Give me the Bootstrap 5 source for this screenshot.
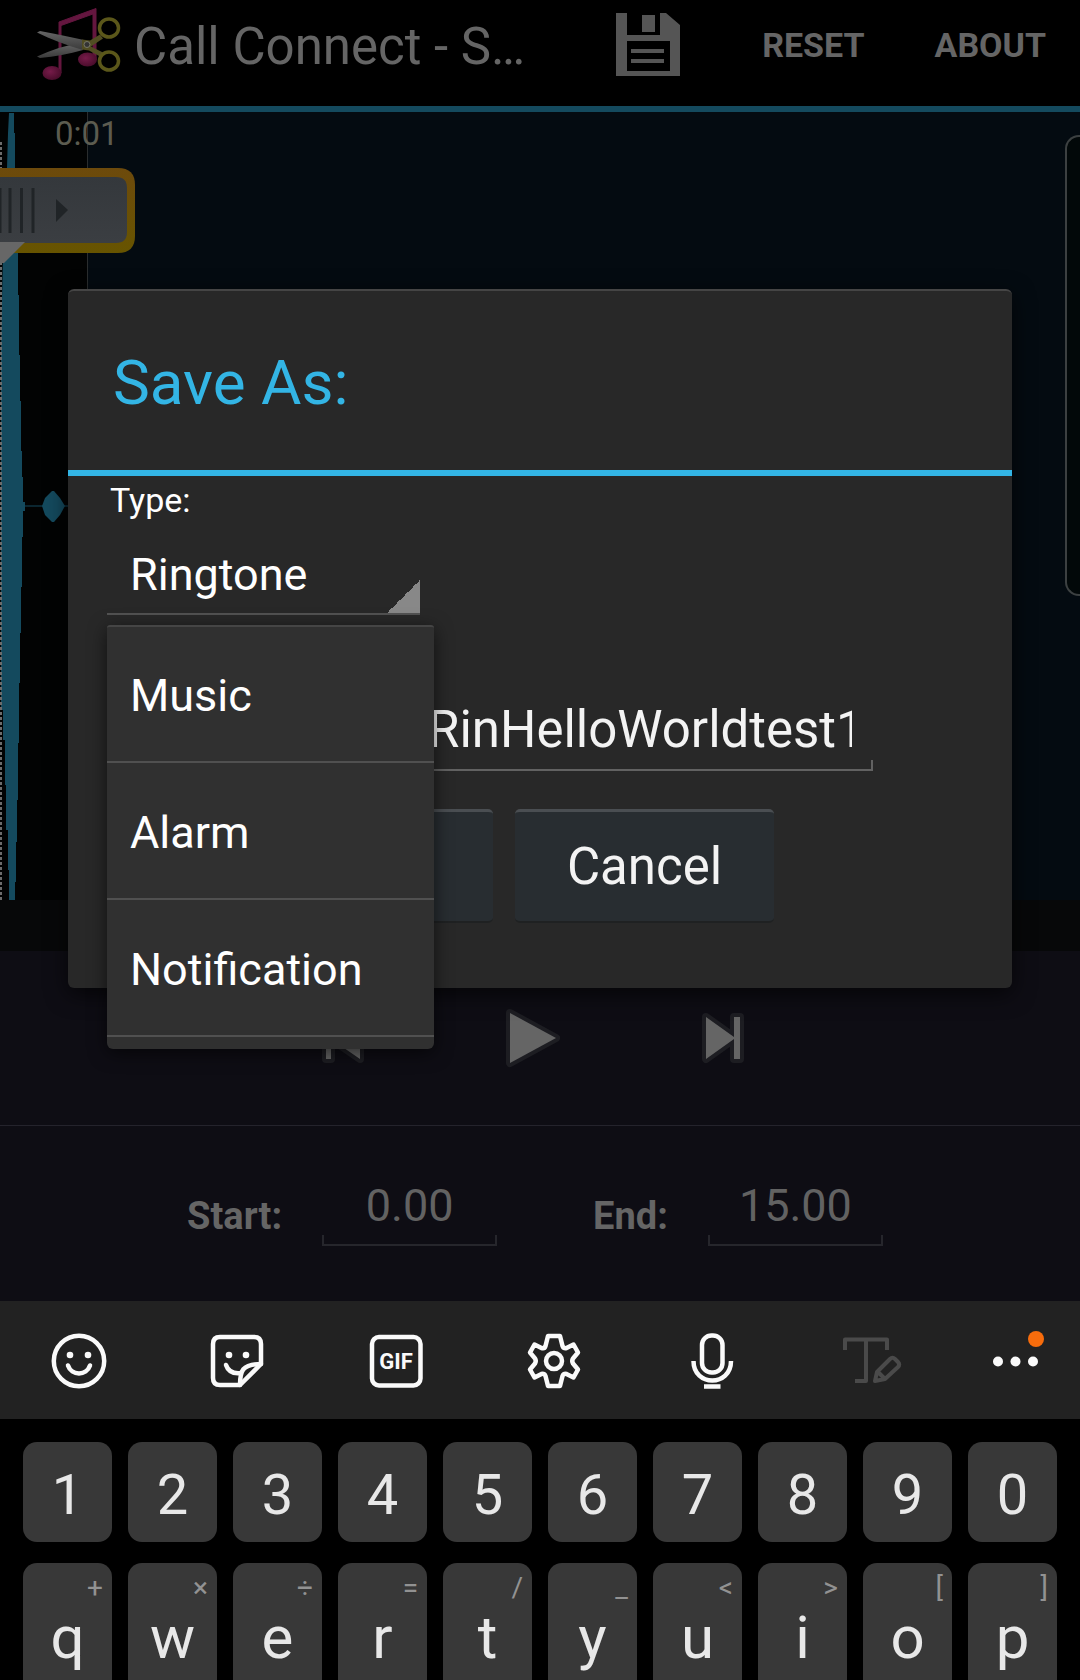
<!DOCTYPE html>
<html lang="en">
<head>
<meta charset="utf-8">
<meta name="viewport" content="width=device-width, initial-scale=1">
<title>Call Connect - Save As</title>
<link href="https://cdn.jsdelivr.net/npm/bootstrap@5.3.0/dist/css/bootstrap.min.css" rel="stylesheet">
<style>
  body { background: #000; font-family: Roboto, "Noto Sans", sans-serif; color: #fff; }
  button, input, select { font-family: inherit; }
  .app { height: 100vh; overflow: hidden; }
  .bare { background: none; border: 0; padding: 0; color: inherit; }

  /* title bar */
  .topbar { height: 112px; padding: 0 34px 16px 36px; border-bottom: 6px solid #144a5e; }
  .app-title { font-size: 51px; line-height: 60px; color: #656565; font-weight: 400; margin: 0 0 0 12px; padding-top: 4px; }
  .bar-actions { gap: 70px; }
  .bar-action { font-size: 34px; line-height: 40px; font-weight: 700; color: #656565; }
  .bar-save { margin: 0 12px 2px 0; }

  /* waveform */
  .wave-panel { height: 839px; background: #070809; }
  .wave-view { height: 788px; background: #040b11; }
  .wave-played { width: 88px; background: #020303; border-right: 1px solid #2a2d2e; }
  .wave-time { left: 55px; top: 2px; font-size: 33px; line-height: 40px; color: #5c5c50; }
  .wave-art { left: 0; top: 0; }
  .end-handle { right: 0; top: 23px; width: 15px; height: 461px; border: 2px solid #3c4041; border-right: 0; border-radius: 14px 0 0 14px; background: #020809; }

  /* playback and range */
  .panel { background: #0e0d14; }
  .playback { height: 175px; border-bottom: 1px solid #24232c; padding-right: 14px; }
  .playback button { width: 190px; height: 80px; }
  .range { height: 175px; padding-right: 10px; }
  .range label { font-size: 38px; line-height: 48px; font-weight: 700; color: #656565; padding-top: 4px; }
  .underlined {
    border: 0; border-radius: 0; outline: 0; color: inherit;
    background:
      linear-gradient(var(--rule), var(--rule)) bottom / 100% 2px no-repeat,
      linear-gradient(var(--rule), var(--rule)) left bottom / 2px 11px no-repeat,
      linear-gradient(var(--rule), var(--rule)) right bottom / 2px 11px no-repeat;
  }
  .range .underlined { --rule: #26262c; width: 175px; height: 64px; padding: 0 0 16px; font-size: 45px; text-align: center; color: #626262; }
  .range-pair { gap: 40px; }
  .range-pairs { gap: 96px; }

  /* dialog */
  .save-dialog { top: 289px; left: 68px; right: 68px; background: #282828; border-top: 2px solid #454545; border-radius: 6px; box-shadow: 0 6px 22px rgba(0,0,0,.65); z-index: 2; }
  .dialog-head { height: 185px; padding: 4px 45px 0; border-bottom: 6px solid #33b5e5; }
  .dialog-head h1 { font-size: 62px; line-height: 72px; font-weight: 400; color: #33b5e5; margin: 0; }
  .dialog-main { padding: 4px 39px 65px; }
  .dialog-main label { font-size: 34px; line-height: 40px; padding-left: 3px; }
  .type-field { width: 327px; }
  .type-select {
    appearance: none; width: 313px; height: 95px; padding: 14px 23px 0; border: 0; outline: 0; border-radius: 0;
    font-size: 45px; color: #fff;
    background:
      linear-gradient(135deg, transparent 50%, #888 50%) right 0 bottom 2px / 33px 33px no-repeat,
      linear-gradient(#525252, #525252) bottom / 100% 2px no-repeat;
  }
  .type-menu { top: 105px; left: 0; width: 327px; padding: 0 0 12px; background: #303030; border-radius: 3px 3px 6px 6px; border-top: 2px solid #454545; box-shadow: 0 4px 18px rgba(0,0,0,.6); z-index: 3; }
  .type-menu button { display: block; width: 100%; height: 137px; padding: 4px 23px 0; text-align: left; font-size: 45px; color: #fff; background: none; border: 0; border-bottom: 2px solid #505050; }
  .type-menu li:first-child button { height: 136px; }
  .file-name { --rule: #626262; width: 766px; height: 84px; margin-top: 72px; padding: 0 21px 0 321px; font-size: 51px; color: #f3f3f3; }
  .dialog-buttons { gap: 22px; margin-top: 38px; padding-left: 127px; }
  .dialog-buttons button { width: 259px; height: 114px; font-size: 51px; color: #f3f3f3; background: #282d31; border: 0; border-top: 3px solid #4a4e52; border-bottom: 2px solid #1f2122; border-radius: 5px; padding: 2px 0 0; }

  /* keyboard */
  .kb-tools { height: 118px; padding-top: 2px; background: #222; }
  .kb-tools button { flex: 1 1 0; color: #fafafa; }
  .kb-tools button:last-child { flex: 0 0 130px; }
  .kb-tools svg { display: block; margin: 0 auto; overflow: visible; }
  .keys { padding: 23px 23px 0; gap: 21px; }
  .key-row { gap: 16px; }
  .key-cap { flex: 1 1 0; height: 100px; border: 0; border-radius: 14px; background: #383838; color: #e8e8e8; font-size: 56px; line-height: 60px; padding: 5px 0 0; }
  .letters .key-cap { height: 140px; font-size: 60px; padding: 45px 0 35px; }
  .key-hint { right: 9px; top: 9px; font-size: 28px; line-height: 32px; color: #929292; }
</style>
</head>
<body>
<div class="app d-flex flex-column position-relative">

  <header class="topbar d-flex align-items-center flex-shrink-0">
    <svg width="86" height="74" viewBox="36 4 86 74" aria-hidden="true">
      <defs>
        <linearGradient id="steel" x1="0" y1="0" x2="0" y2="1"><stop offset="0" stop-color="#666"/><stop offset="1" stop-color="#3a3a3a"/></linearGradient>
        <radialGradient id="note" cx=".4" cy=".4" r=".6"><stop offset="0" stop-color="#761b49"/><stop offset="1" stop-color="#4b0d2c"/></radialGradient>
      </defs>
      <path d="M59 69V18L96 4.500V56h-3V10L61 21.500V69z" fill="#64163f" stroke="#64163f"/>
      <ellipse cx="52" cy="69" rx="9.500" ry="7" fill="url(#note)"/>
      <ellipse cx="87.500" cy="55.500" rx="9.500" ry="7" fill="url(#note)"/>
      <path d="M37 52.500l3 1.500c15-1.500 29-4 43-8l-1-7c-16 2-31 7-45 13.500z" fill="url(#steel)"/>
      <path d="M37 28.500l3-1.500c16 3 30 6 44 9l-1 10C66 41 51 35.500 37 28.500z" fill="url(#steel)"/>
      <path d="M82 35.500l8 1 10-6 3 4-12 8 12 6-3 4-11-6-7-1z" fill="#514d22"/>
      <ellipse cx="109" cy="24" rx="9.500" ry="9" fill="none" stroke="#5b571a" stroke-width="3.500"/>
      <ellipse cx="109" cy="57" rx="9.500" ry="9" fill="none" stroke="#5b571a" stroke-width="3.500"/>
      <circle cx="87" cy="40.500" r="3" fill="#333" stroke="#777768"/>
    </svg>
    <h2 class="app-title text-nowrap">Call Connect - S…</h2>
    <div class="bar-actions d-flex align-items-center ms-auto">
      <button class="bare bar-save" type="button" aria-label="Save">
        <svg class="d-block" width="64" height="64" viewBox="0 0 64 64"><path fill="#555" fill-rule="evenodd" d="M0 1h11v22h33V1h6l14 12v51H0zM11 29v30h43V29z"/><path fill="#555" d="M26 3h13v17H26zM15 37h33v4H15zM15 47h33v4H15z"/></svg>
      </button>
      <button class="bare bar-action" type="button">RESET</button>
      <button class="bare bar-action" type="button">ABOUT</button>
    </div>
  </header>

  <section class="wave-panel flex-shrink-0">
    <div class="wave-view position-relative">
      <div class="wave-played h-100"></div>
      <div class="wave-time position-absolute">0:01</div>
      <svg class="wave-art position-absolute" width="140" height="788" viewBox="0 112 140 788" aria-hidden="true">
        <defs>
          <linearGradient id="gold" x1="0" y1="0" x2="0" y2="1"><stop offset="0" stop-color="#6d4a0c"/><stop offset="1" stop-color="#675400"/></linearGradient>
          <linearGradient id="grip" x1="0" y1="0" x2="0" y2="1"><stop offset="0" stop-color="#34383c"/><stop offset="1" stop-color="#3b3e42"/></linearGradient>
        </defs>
        <path d="M9 113h5v20h1v36h1v84h2v42h1v60h1v46h1v50h1v26h1v25h2v9h-2v26h-1v50h-1v46h-1v50h-1v60h-1v57h-1v42h-1v40h-1v18H9v-30H8v-40H6v-45H5v-45H3v-30H1V350l2-100 4-82 1-35z" fill="#144a5e"/>
        <path d="M25 506h43" stroke="#144a5e"/>
        <path d="M42 506l3-8 7-7h2l6 7 5 8-5 9-6 7h-2l-7-7z" fill="#144a5e"/>
        <path d="M1 142V900" stroke="#6c6c6c" stroke-width="2" stroke-dasharray="3 2"/>
        <path d="M0 168h118q17 0 17 17v51q0 17-17 17H0z" fill="url(#gold)"/>
        <path d="M0 177h116q11 0 11 11v44q0 11-11 11H0z" fill="url(#grip)"/>
        <path d="M0 188v45M10 188v45M21.500 188v45M33 188v45" stroke="#202427" stroke-width="3"/>
        <path d="M56 199l12 11-12 12z" fill="#202427"/>
        <path d="M0 242h25L4 263H0z" fill="#676767"/>
      </svg>
      <div class="end-handle position-absolute"></div>
    </div>
  </section>

  <section class="panel flex-shrink-0">
    <div class="playback d-flex justify-content-center align-items-center">
      <button class="bare" type="button" aria-label="Rewind"><svg width="44" height="60" viewBox="0 0 44 60"><path d="M5 9h5v20L39 9v42L10 31v20H5z" fill="#656565" stroke="#1d1d22" stroke-width="8" stroke-linejoin="round" paint-order="stroke"/></svg></button>
      <button class="bare" type="button" aria-label="Play"><svg width="54" height="60" viewBox="0 0 54 60"><path d="M4 5l46 25L4 55z" fill="#656565" stroke="#1d1d22" stroke-width="8" stroke-linejoin="round" paint-order="stroke"/></svg></button>
      <button class="bare" type="button" aria-label="Fast forward"><svg width="44" height="60" viewBox="0 0 44 60"><path d="M5 9l28 20V9h6v42h-6V31L5 51z" fill="#656565" stroke="#1d1d22" stroke-width="8" stroke-linejoin="round" paint-order="stroke"/></svg></button>
    </div>
    <div class="range range-pairs d-flex justify-content-center align-items-center">
      <div class="range-pair d-flex align-items-center"><label for="start">Start:</label><input class="underlined" id="start" type="text" value="0.00"></div>
      <div class="range-pair d-flex align-items-center"><label for="end">End:</label><input class="underlined" id="end" type="text" value="15.00"></div>
    </div>
  </section>

  <section class="flex-shrink-0">
    <div class="kb-tools d-flex align-items-center">
      <button class="bare" type="button" aria-label="Emoji"><svg width="56" height="56" viewBox="0 0 56 56" fill="none" stroke="currentColor" stroke-width="4.500" stroke-linecap="round"><circle cx="28" cy="28" r="25.200"/><path d="M17 32.500c3.500 10.500 18.500 10.500 22 0"/><circle cx="19" cy="22" r="3.300" fill="currentColor" stroke="none"/><circle cx="37" cy="22" r="3.300" fill="currentColor" stroke="none"/></svg></button>
      <button class="bare" type="button" aria-label="Stickers"><svg width="56" height="56" viewBox="0 0 56 56" fill="none" stroke="currentColor" stroke-width="4.500" stroke-linecap="round" stroke-linejoin="round"><path d="M31 52H11q-7 0-7-7V11q0-7 7-7h34q7 0 7 7v20z"/><path d="M31 52c0-14 2-21 21-21"/><path d="M17 32c2 6 7 9 15 8"/><circle cx="20" cy="22" r="3.300" fill="currentColor" stroke="none"/><circle cx="37" cy="22" r="3.300" fill="currentColor" stroke="none"/></svg></button>
      <button class="bare" type="button" aria-label="GIF"><svg width="56" height="56" viewBox="0 0 56 56"><rect x="4" y="4" width="48.500" height="48.500" rx="7" fill="none" stroke="currentColor" stroke-width="4.500"/><text x="28" y="36" text-anchor="middle" font-family="Roboto, sans-serif" font-weight="700" font-size="22" fill="currentColor">GIF</text></svg></button>
      <button class="bare" type="button" aria-label="Settings"><svg width="56" height="56" viewBox="0 0 56 56" fill="none" stroke="currentColor" stroke-width="4.500" stroke-linejoin="round"><path d="M22 3h12l2.500 10q1 3 4 2l7-3.500 4.500 8-5 6q-1.500 2.500 0 5l5 6-4.500 8-7-3.500q-3-1-4 2L34 53H22l-2.500-10q-1-3-4-2l-7 3.500-4.500-8 5-6q1.500-2.500 0-5l-5-6 4.500-8 7 3.500q3 1 4-2z"/><circle cx="28" cy="28" r="8"/></svg></button>
      <button class="bare" type="button" aria-label="Voice input"><svg width="56" height="56" viewBox="0 0 56 56" fill="none" stroke="currentColor" stroke-width="4.500"><rect x="18" y="2.500" width="20.500" height="37" rx="9.500"/><path d="M9.500 28c0 26 37.500 26 37.500 0M20 53.500h16.500"/></svg></button>
      <button class="bare" type="button" aria-label="Text editing"><svg width="56" height="56" viewBox="0 0 56 56" fill="none" stroke="#4a4a4a" stroke-width="4" stroke-linejoin="round"><path d="M2 17V6.500h42V17M23 6.500V48H12"/><path d="M32 48l2-9 13-13q2.500-2.500 5 0l3 3q2.500 2.500 0 5L42 46zM35 39l6 6"/></svg></button>
      <button class="bare" type="button" aria-label="More"><svg width="56" height="56" viewBox="0 0 56 56" fill="currentColor"><circle cx="11" cy="28.500" r="5"/><circle cx="28.500" cy="28.500" r="5"/><circle cx="46" cy="28.500" r="5"/><circle cx="49" cy="6" r="8" fill="#f76c0c"/></svg></button>
    </div>
    <div class="keys d-flex flex-column">
      <div class="key-row d-flex">
        <button class="key-cap" type="button">1</button><button class="key-cap" type="button">2</button><button class="key-cap" type="button">3</button><button class="key-cap" type="button">4</button><button class="key-cap" type="button">5</button><button class="key-cap" type="button">6</button><button class="key-cap" type="button">7</button><button class="key-cap" type="button">8</button><button class="key-cap" type="button">9</button><button class="key-cap" type="button">0</button>
      </div>
      <div class="key-row letters d-flex">
        <button class="key-cap position-relative" type="button"><span class="key-hint position-absolute">+</span>q</button>
        <button class="key-cap position-relative" type="button"><span class="key-hint position-absolute">×</span>w</button>
        <button class="key-cap position-relative" type="button"><span class="key-hint position-absolute">÷</span>e</button>
        <button class="key-cap position-relative" type="button"><span class="key-hint position-absolute">=</span>r</button>
        <button class="key-cap position-relative" type="button"><span class="key-hint position-absolute">/</span>t</button>
        <button class="key-cap position-relative" type="button"><span class="key-hint position-absolute">_</span>y</button>
        <button class="key-cap position-relative" type="button"><span class="key-hint position-absolute">&lt;</span>u</button>
        <button class="key-cap position-relative" type="button"><span class="key-hint position-absolute">&gt;</span>i</button>
        <button class="key-cap position-relative" type="button"><span class="key-hint position-absolute">[</span>o</button>
        <button class="key-cap position-relative" type="button"><span class="key-hint position-absolute">]</span>p</button>
      </div>
    </div>
  </section>

  <div class="save-dialog position-absolute" role="dialog" aria-labelledby="dlg-title">
    <div class="dialog-head d-flex align-items-center"><h1 id="dlg-title">Save As:</h1></div>
    <div class="dialog-main d-flex flex-column align-items-start">
      <label for="type">Type:</label>
      <div class="type-field position-relative">
        <select class="type-select d-block" id="type"><option>Ringtone</option></select>
        <ul class="type-menu list-unstyled position-absolute m-0">
          <li><button type="button">Music</button></li>
          <li><button type="button">Alarm</button></li>
          <li><button type="button">Notification</button></li>
        </ul>
      </div>
      <input class="file-name underlined" type="text" value="RinHelloWorldtest1" aria-label="File name">
      <div class="dialog-buttons d-flex">
        <button type="button" aria-label="Save"></button>
        <button type="button">Cancel</button>
      </div>
    </div>
  </div>
</div>
<script src="https://cdn.jsdelivr.net/npm/bootstrap@5.3.0/dist/js/bootstrap.bundle.min.js"></script>
</body>
</html>
